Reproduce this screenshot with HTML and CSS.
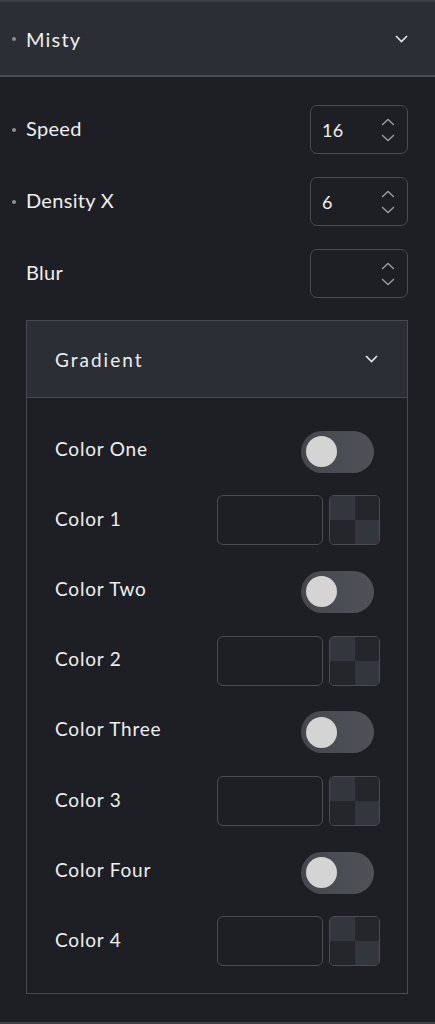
FILE: index.html
```html
<!DOCTYPE html>
<html>
<head>
<meta charset="utf-8">
<link rel="stylesheet" href="styles.css">
</head>
<body>
<div class="header">
  <span class="dot"></span>
  <span class="header-title">Misty</span>
  <svg class="chev" width="13" height="8" viewBox="0 0 13 8"><path d="M1 1 L6.5 6.5 L12 1" fill="none" stroke="#e6e6e6" stroke-width="1.6"/></svg>
</div>
<div class="content">
  <div class="field-row">
    <span class="dot"></span>
    <span class="label">Speed</span>
    <div class="num-box"><span class="num-val">16</span><span class="spin"><svg width="14" height="8" viewBox="0 0 14 8"><path d="M1 7 L7 1.5 L13 7" fill="none" stroke="#9c9ea3" stroke-width="1.3"/></svg><svg width="14" height="8" viewBox="0 0 14 8"><path d="M1 1 L7 6.5 L13 1" fill="none" stroke="#9c9ea3" stroke-width="1.3"/></svg></span></div>
  </div>
  <div class="field-row">
    <span class="dot"></span>
    <span class="label">Density X</span>
    <div class="num-box"><span class="num-val">6</span><span class="spin"><svg width="14" height="8" viewBox="0 0 14 8"><path d="M1 7 L7 1.5 L13 7" fill="none" stroke="#9c9ea3" stroke-width="1.3"/></svg><svg width="14" height="8" viewBox="0 0 14 8"><path d="M1 1 L7 6.5 L13 1" fill="none" stroke="#9c9ea3" stroke-width="1.3"/></svg></span></div>
  </div>
  <div class="field-row">
    <span class="dot hidden"></span>
    <span class="label">Blur</span>
    <div class="num-box"><span class="num-val"></span><span class="spin"><svg width="14" height="8" viewBox="0 0 14 8"><path d="M1 7 L7 1.5 L13 7" fill="none" stroke="#9c9ea3" stroke-width="1.3"/></svg><svg width="14" height="8" viewBox="0 0 14 8"><path d="M1 1 L7 6.5 L13 1" fill="none" stroke="#9c9ea3" stroke-width="1.3"/></svg></span></div>
  </div>

  <div class="panel">
    <div class="panel-head">
      <span class="panel-title">Gradient</span>
      <svg class="chev" width="13" height="8" viewBox="0 0 13 8"><path d="M1 1 L6.5 6.5 L12 1" fill="none" stroke="#e6e6e6" stroke-width="1.6"/></svg>
    </div>
    <div class="panel-body">
      <div class="prow"><span class="plabel">Color One</span><span class="toggle"><span class="knob"></span></span></div>
      <div class="prow"><span class="plabel">Color 1</span><span class="color-ctrl"><span class="color-input"></span><span class="swatch"><span></span><span></span><span></span><span></span></span></span></div>
      <div class="prow"><span class="plabel">Color Two</span><span class="toggle"><span class="knob"></span></span></div>
      <div class="prow"><span class="plabel">Color 2</span><span class="color-ctrl"><span class="color-input"></span><span class="swatch"><span></span><span></span><span></span><span></span></span></span></div>
      <div class="prow"><span class="plabel">Color Three</span><span class="toggle"><span class="knob"></span></span></div>
      <div class="prow"><span class="plabel">Color 3</span><span class="color-ctrl"><span class="color-input"></span><span class="swatch"><span></span><span></span><span></span><span></span></span></span></div>
      <div class="prow"><span class="plabel">Color Four</span><span class="toggle"><span class="knob"></span></span></div>
      <div class="prow"><span class="plabel">Color 4</span><span class="color-ctrl"><span class="color-input"></span><span class="swatch"><span></span><span></span><span></span><span></span></span></span></div>
    </div>
  </div>
</div>
<div class="next-section"></div>
</body>
</html>
```
FILE: styles.css
```css
* { box-sizing: border-box; }
html, body {
  margin: 0;
  padding: 0;
  background: #1e1f25;
  font-family: Lato, "Noto Sans", sans-serif;
  color: #efefef;
}
body { height: 1024px; overflow: hidden; }

.header {
  height: 77px;
  background: #2b2e35;
  border-top: 2px solid #3c3f46;
  border-bottom: 2px solid #4a4d54;
  display: flex;
  align-items: center;
  padding: 0 27px 0 12px;
}
.dot {
  width: 4px;
  height: 4px;
  border-radius: 50%;
  background: #8d8f94;
  margin-right: 10px;
  flex: none;
}
.dot.hidden { visibility: hidden; }
.header-title {
  font-size: 20px;
  letter-spacing: 1.2px;
  flex: 1;
}
.chev { display: block; flex: none; }

.content {
  padding: 28px 27px 0 12px;
}
.field-row {
  display: flex;
  align-items: center;
  height: 49px;
  margin-bottom: 23px;
}
.label {
  font-size: 20px;
  letter-spacing: 0.3px;
  flex: 1;
  margin-bottom: 3px;
}
.num-box {
  width: 98px;
  height: 49px;
  border: 1.5px solid #4a4c52;
  border-radius: 7px;
  display: flex;
  align-items: center;
  justify-content: space-between;
  padding: 0 12px 0 11px;
}
.num-val { font-size: 18px; letter-spacing: 0.3px; }
.spin {
  display: flex;
  flex-direction: column;
  gap: 8px;
}
.spin svg { display: block; }

.panel {
  margin: -1px 0 0 14px;
  border: 1.5px solid #484a51;
}
.panel-head {
  height: 77px;
  background: #2b2e35;
  border-bottom: 1.5px solid #484a51;
  display: flex;
  align-items: center;
  justify-content: space-between;
  padding: 0 29px 0 28px;
}
.panel-title {
  font-size: 19px;
  letter-spacing: 2px;
}
.panel-body {
  padding: 17px 27px 16px 28px;
}
.prow {
  height: 70.2px;
  display: flex;
  align-items: center;
  justify-content: space-between;
}
.plabel { font-size: 19px; letter-spacing: 0.8px; margin-bottom: 4px; }
.toggle {
  width: 73px;
  height: 42px;
  border-radius: 21px;
  background: linear-gradient(90deg, #45474d 0%, #4c4e55 60%, #4f5157 100%);
  margin-right: 6px;
  margin-top: 3px;
  display: flex;
  align-items: center;
  padding-left: 5px;
}
.knob {
  width: 31px;
  height: 31px;
  border-radius: 50%;
  background: #d4d4d4;
}
.color-ctrl {
  display: flex;
  gap: 6px;
}
.color-input {
  width: 106px;
  height: 50px;
  border: 1.5px solid #4a4c52;
  border-radius: 6px;
}
.swatch {
  width: 51px;
  height: 50px;
  border: 1.5px solid #4a4c52;
  border-radius: 5px;
  overflow: hidden;
  display: grid;
  grid-template-columns: 1fr 1fr;
  grid-template-rows: 1fr 1fr;
}
.swatch span:nth-child(1), .swatch span:nth-child(4) { background: #33363d; }
.swatch span:nth-child(2), .swatch span:nth-child(3) { background: #24262c; }

.next-section {
  margin-top: 28px;
  height: 4px;
  border-top: 2px solid #3e4047;
  background: #2b2e35;
}
```
